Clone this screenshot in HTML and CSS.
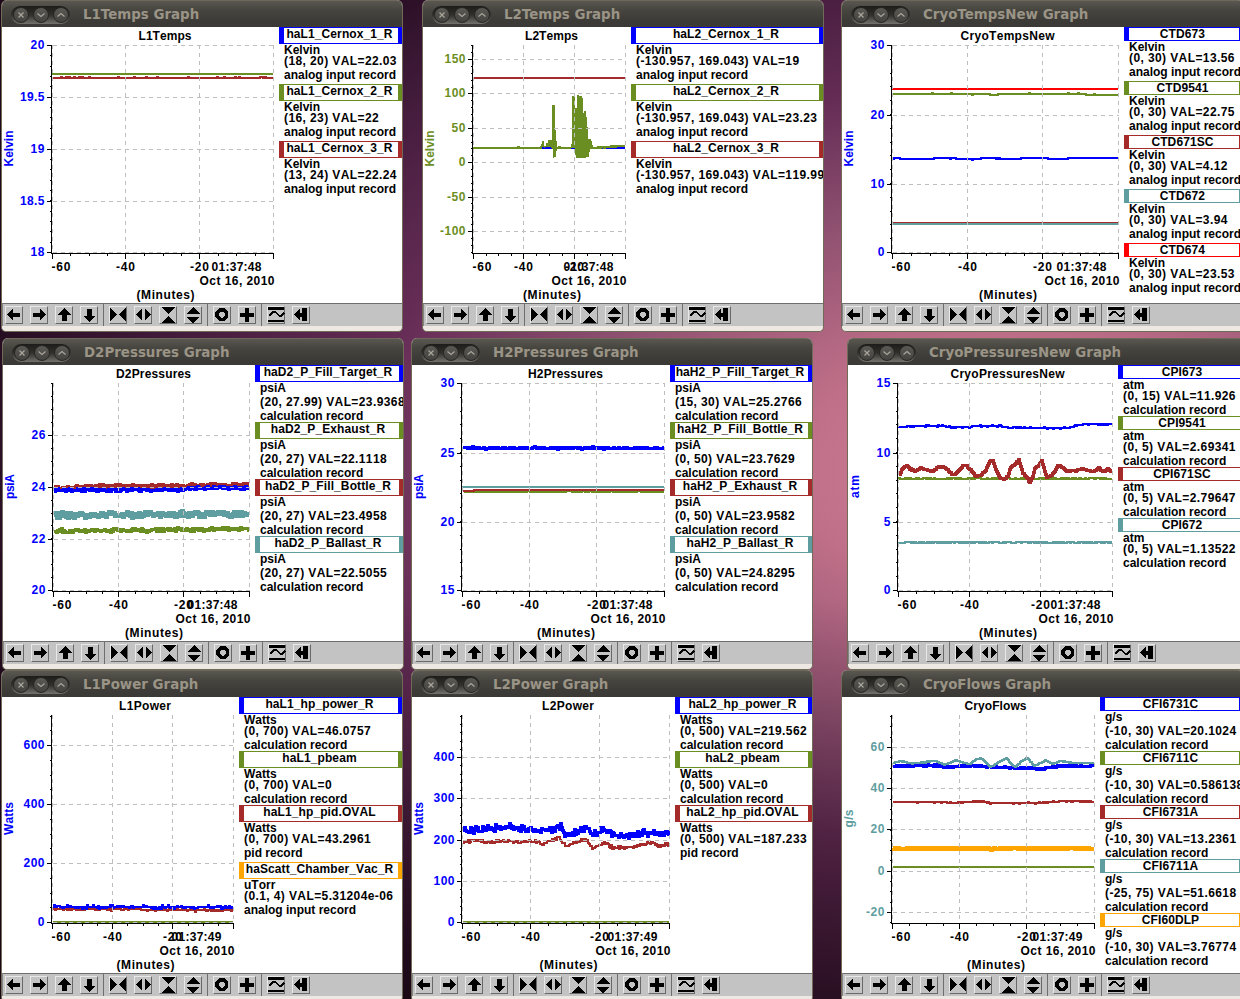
FILE: index.html
```
<!DOCTYPE html>
<html lang="en">
<head>
<meta charset="utf-8">
<title>StripTool Graphs</title>
<link rel="stylesheet" href="styles.css">
</head>
<body>
<svg class="defs" aria-hidden="true">
  <symbol id="i-left" viewBox="0 0 18 18"><path d="M2 8.5L8 2.500V6.5H15V11H8V15z"/></symbol>
  <symbol id="i-right" viewBox="0 0 18 18"><path d="M16 8.5L10 2.500V6.5H3V11H10V15z"/></symbol>
  <symbol id="i-up" viewBox="0 0 18 18"><path d="M9.5 2L16 9H12V15H7V9H3z"/></symbol>
  <symbol id="i-down" viewBox="0 0 18 18"><path d="M9.5 16L16 9.500H12V3H7V9.500H3z"/></symbol>
  <symbol id="i-hin" viewBox="0 0 18 18"><path d="M1 1.500L8 8.500L1 15.500zM17 1.500L10 8.500L17 15.500z"/></symbol>
  <symbol id="i-hout" viewBox="0 0 18 18"><path d="M8 2V15L1.500 8.500zM10.500 2V15L17 8.500z"/></symbol>
  <symbol id="i-vin" viewBox="0 0 18 18"><path d="M2 1H16L9 8zM2 17H16L9 10z"/></symbol>
  <symbol id="i-vout" viewBox="0 0 18 18"><path d="M2 8H16L9 1zM2 10.500H16L9 17z"/></symbol>
  <symbol id="i-ring" viewBox="0 0 18 18"><path fill-rule="evenodd" d="M6 2H11L15 6V11L11 15H6L2 11V6zM7.500 5.500L5.500 7.500V9.500L7.500 11.500H9.500L11.500 9.500V7.500L9.500 5.500z"/></symbol>
  <symbol id="i-plus" viewBox="0 0 18 18"><path d="M6.500 2H11V6.500H15.500V11H11V15.500H6.500V11H2V6.500H6.500z"/></symbol>
  <symbol id="i-wave" viewBox="0 0 18 18"><path d="M1 1H17V3.500H1zM1 13.500H17V16H1z"/><path d="M2 10L6 6H8L13 10H14L17 7" fill="none" stroke="#000" stroke-width="1.600"/></symbol>
  <symbol id="i-end" viewBox="0 0 18 18"><path d="M2 8.500L8 3V6.500H10V2H15V15H10V11H8V14.500z"/></symbol>
</svg>
<main class="desktop"></main>
<script src="app.js"></script>
</body>
</html>
```
FILE: styles.css
```
body {
  margin: 0;
  width: 1240px;
  height: 999px;
  overflow: hidden;
  font: bold 12px/12px "Liberation Sans", Arial, sans-serif;
  font-kerning: none;
  color: #000;
}

.defs { display: none; }

.desktop {
  position: relative;
  width: 1240px;
  height: 999px;
  overflow: hidden;
  background:
    linear-gradient(180deg, rgba(20, 5, 12, 0) 60%, rgba(20, 5, 12, .45) 100%),
    radial-gradient(ellipse 1090px 640px at 1010px 470px, #d58399 0, #bf6f88 20%, #8d4f6f 42%, #652c56 60%, #421b3b 80%, #1d0919 100%);
}

.window {
  position: absolute;
  display: flex;
  flex-direction: column;
  box-sizing: border-box;
  height: 332px;
  overflow: hidden;
  border: 1px solid #716a59;
  border-top: 0;
  border-radius: 6px 6px 5px 5px;
  background: #ede9e2;
}

.titlebar {
  display: flex;
  align-items: center;
  flex: 0 0 27px;
  box-sizing: border-box;
  padding: 1px 0 0 9px;
  border-top: 1px solid #6e675b;
  background: linear-gradient(#5a5751 0, #47453f 35%, #3d3b37 75%, #3a3935 100%);
  font: bold 13.4px/20px "DejaVu Sans", sans-serif;
  color: #9a9486;
}

.controls {
  display: flex;
  align-items: center;
  gap: 4px;
  box-sizing: border-box;
  width: 59px;
  height: 18px;
  margin-right: 13px;
  padding-left: 2px;
  border-radius: 9px;
  background: linear-gradient(#1d1c1a 0, #31302c 50%, #74726c 100%);
}

.controls svg {
  flex: none;
  box-sizing: border-box;
  width: 16px;
  height: 16px;
  fill: none;
  stroke: #aaa69c;
  stroke-width: 1.2;
  border: 1px solid #282724;
  border-radius: 50%;
  background: linear-gradient(#5b5954, #45433f);
}

.content {
  display: flex;
  flex: 0 0 276px;
  background: #fff;
}

.chart { flex: none; display: block; overflow: visible; }
.chart text { white-space: pre; }
.axis { stroke: #000; fill: none; shape-rendering: crispEdges; }
.grid { stroke: #bebebe; fill: none; stroke-dasharray: 4 4; shape-rendering: crispEdges; }
.trace { fill: none; stroke-width: 2; shape-rendering: crispEdges; }
.burst { stroke: none; shape-rendering: crispEdges; }

.legend { flex: 1; min-width: 0; overflow: hidden; }
.entry { padding-bottom: 1px; white-space: nowrap; }

.name {
  box-sizing: border-box;
  height: 17px;
  padding-right: 3px;
  border: solid;
  border-width: 1px 4px 1px 5px;
  text-align: center;
  letter-spacing: .1px;
}

.line { height: 11px; padding-left: 5px; }
.deep { height: 14px; }
.value { letter-spacing: .4px; }
.name.short { height: 14px; }

.toolbar {
  display: flex;
  align-items: center;
  flex: 0 0 23px;
  box-sizing: border-box;
  border-top: 1px solid #6e6e6e;
  border-left: 1px solid #858585;
  background: #c3c3c3;
}

.group {
  display: flex;
  align-items: center;
  gap: 7px;
  height: 22px;
  padding: 0 5px;
  border-right: 1px solid #6e6e6e;
}

.group:first-child { padding-left: 2px; }
.group:last-child { border-right: 0; }

.tool {
  display: block;
  width: 16px;
  height: 16px;
  border: 1px solid;
  border-color: #e8e8e8 #696969 #696969 #e8e8e8;
}

.tool svg { display: block; width: 18px; height: 18px; margin: -1px; shape-rendering: crispEdges; }
```
FILE: app.js
```
const BLUE = '#0000ff', OLIVE = '#6b8e23', BROWN = '#a52a2a', TEAL = '#5f9ea0', ORANGE = '#ffa500', RED = '#ff0000';
const AIR = 'analog input record', CALC = 'calculation record';

// y: [pixel, label] pairs; x: pixel columns of -60, -40, -20 and 0.
// Each trace is {c, p: [x, y, ...], n: noise amplitude, t: chance of a noise step}.
const graphs = [
  { left: 1, top: 0, name: 'L1Temps', unit: 'Kelvin', ulen: 36, color: BLUE, x: [52, 125, 199, 273], time: '01:37:48',
    y: [[45, '20'], [97, '19.5'], [149, '19'], [201, '18.5'], [252, '18']], div: 5,
    traces: [{ c: OLIVE, p: [52, 74, 272, 74] }, { c: BROWN, p: [53, 78, 272, 78], n: -1, t: .08 }],
    legend: [[BLUE, 'haL1_Cernox_1_R', 'Kelvin', '(18, 20) VAL=22.03', AIR], [OLIVE, 'haL1_Cernox_2_R', 'Kelvin', '(16, 23) VAL=22', AIR], [BROWN, 'haL1_Cernox_3_R', 'Kelvin', '(13, 24) VAL=22.24', AIR]] },
  { left: 422, top: 0, name: 'L2Temps', unit: 'Kelvin', ulen: 36, color: OLIVE, x: [473, 523, 574, 625], time: '01:37:48',
    y: [[59, '150'], [93, '100'], [128, '50'], [162, '0'], [197, '-50'], [231, '-100']], div: 5,
    traces: [{ c: BROWN, p: [474, 78, 624, 78] },
      { c: OLIVE, p: [473, 148, 624, 148], n: -1, t: .03 },
      { c: BLUE, p: [542, 148, 551, 148] }, { c: BLUE, p: [571, 148, 576, 148] }, { c: BLUE, p: [602, 148, 624, 148] },
      { c: OLIVE, fill: 'M541 147V144H542V141H544V146H546V143H548V140H552V105H555V130H556V141H557V151H556V157H554V158H553V148H551V147H545V148H544V147zM571 148V144H572V96H575V108H577V95H579V96H582V98H583V113H584V111H586V117H587V127H588V139H591V141H592V145H593V149H590V152H589V157H586V158H576V155H575V148z' },
      { c: OLIVE, p: [593, 148, 602, 147, 612, 147, 624, 145.500], n: .8, t: .5 }],
    legend: [[BLUE, 'haL2_Cernox_1_R', 'Kelvin', '(-130.957, 169.043) VAL=19', AIR], [OLIVE, 'haL2_Cernox_2_R', 'Kelvin', '(-130.957, 169.043) VAL=23.23', AIR], [BROWN, 'haL2_Cernox_3_R', 'Kelvin', '(-130.957, 169.043) VAL=119.99', AIR]] },
  { left: 841, top: 0, wide: 1, name: 'CryoTempsNew', unit: 'Kelvin', ulen: 36, color: BLUE, x: [892, 967, 1042, 1118], time: '01:37:48',
    y: [[45, '30'], [115, '20'], [184, '10'], [252, '0']], div: 5,
    traces: [{ c: RED, p: [892, 89, 1117, 89] }, { c: OLIVE, p: [893, 94, 985, 94, 995, 95, 1000, 94, 1082, 94, 1090, 95, 1117, 95], n: 1, t: .06 },
      { c: BLUE, p: [893, 158, 905, 159, 930, 159, 936, 158, 975, 159, 985, 158, 1010, 159, 1030, 158, 1065, 159, 1070, 158, 1117, 158], n: 1, t: .06 },
      { c: TEAL, p: [893, 224, 1117, 224] }, { c: BROWN, p: [893, 222.400, 1117, 222.400], w: 1 }],
    legend: [[BLUE, 'CTD673', 'Kelvin', '(0, 30) VAL=13.56', AIR], [OLIVE, 'CTD9541', 'Kelvin', '(0, 30) VAL=22.75', AIR], [BROWN, 'CTD671SC', 'Kelvin', '(0, 30) VAL=4.12', AIR], [TEAL, 'CTD672', 'Kelvin', '(0, 30) VAL=3.94', AIR], [RED, 'CTD674', 'Kelvin', '(0, 30) VAL=23.53', AIR]] },
  { left: 2, top: 338, name: 'D2Pressures', unit: 'psiA', ulen: 25, color: BLUE, x: [53, 118, 183, 249], time: '01:37:48',
    y: [[97, '26'], [149, '24'], [201, '22'], [252, '20']], div: 4,
    traces: [{ c: BROWN, p: [54, 150, 110, 148, 248, 147], n: 1.5, w: 3 }, { c: BLUE, p: [54, 152, 175, 152, 200, 150, 248, 150], n: 1.5, w: 3 },
      { c: TEAL, p: [54, 177, 248, 176], n: 2.8, w: 4 }, { c: OLIVE, p: [54, 193, 248, 191], n: 1.8, w: 3 }],
    legend: [[BLUE, 'haD2_P_Fill_Target_R', 'psiA', '(20, 27.99) VAL=23.9368', CALC], [OLIVE, 'haD2_P_Exhaust_R', 'psiA', '(20, 27) VAL=22.1118', CALC], [BROWN, 'haD2_P_Fill_Bottle_R', 'psiA', '(20, 27) VAL=23.4958', CALC], [TEAL, 'haD2_P_Ballast_R', 'psiA', '(20, 27) VAL=22.5055', CALC]] },
  { left: 411, top: 338, name: 'H2Pressures', unit: 'psiA', ulen: 25, color: BLUE, x: [462, 529, 596, 664], time: '01:37:48',
    y: [[45, '30'], [115, '25'], [184, '20'], [252, '15']], div: 5,
    traces: [{ c: BLUE, p: [463, 110, 663, 110], n: 1, t: .6, w: 3 }, { c: TEAL, p: [462, 149, 663, 149] },
      { c: OLIVE, p: [463, 153.600, 663, 153.600], n: .6 }, { c: BROWN, p: [463, 153, 485, 152, 663, 152], n: .5, t: .1 }],
    legend: [[BLUE, 'haH2_P_Fill_Target_R', 'psiA', '(15, 30) VAL=25.2766', CALC], [OLIVE, 'haH2_P_Fill_Bottle_R', 'psiA', '(0, 50) VAL=23.7629', CALC], [BROWN, 'haH2_P_Exhaust_R', 'psiA', '(0, 50) VAL=23.9582', CALC], [TEAL, 'haH2_P_Ballast_R', 'psiA', '(0, 50) VAL=24.8295', CALC]] },
  { left: 847, top: 338, name: 'CryoPressuresNew', unit: 'atm', ulen: 23, color: BLUE, x: [898, 969, 1040, 1112], time: '01:37:48',
    y: [[45, '15'], [115, '10'], [184, '5'], [252, '0']], div: 5,
    traces: [{ c: BLUE, p: [898, 89, 914, 88, 943, 88, 954, 89.500, 967, 89.500, 974, 88, 1000, 88, 1007, 89.500, 1040, 90, 1067, 90, 1077, 87, 1087, 86, 1111, 86.500], n: .6 },
      { c: OLIVE, p: [898, 140.600, 1111, 140.600], n: .7 },
      { c: BROWN, w: 3, n: .5, p: [899, 136, 902, 130, 906, 127, 909, 131, 914, 133, 920, 130, 927, 132, 932, 134, 937, 129, 942, 128, 947, 132, 952, 137, 957, 134, 962, 128, 965, 127, 970, 132, 975, 138, 980, 137, 985, 132, 989, 123, 992, 122, 995, 132, 1000, 141, 1004, 141, 1007, 138, 1010, 129, 1014, 127, 1018, 122, 1022, 135, 1027, 141, 1029, 145, 1032, 138, 1034, 130, 1038, 127, 1041, 123, 1044, 133, 1046, 139, 1050, 138, 1054, 133, 1057, 127, 1060, 128, 1065, 133, 1074, 133, 1080, 131, 1087, 132, 1092, 134, 1098, 130, 1102, 134, 1107, 131, 1111, 134] },
      { c: TEAL, p: [898, 204.500, 1111, 204.500], n: .5 }],
    legend: [[BLUE, 'CPI673', 'atm', '(0, 15) VAL=11.926', CALC], [OLIVE, 'CPI9541', 'atm', '(0, 5) VAL=2.69341', CALC], [BROWN, 'CPI671SC', 'atm', '(0, 5) VAL=2.79647', CALC], [TEAL, 'CPI672', 'atm', '(0, 5) VAL=1.13522', CALC]] },
  { left: 1, top: 670, name: 'L1Power', unit: 'Watts', ulen: 33, color: BLUE, x: [52, 112, 172, 233], time: '01:37:49',
    y: [[75, '600'], [134, '400'], [193, '200'], [252, '0']], div: 4,
    traces: [{ c: BROWN, p: [53, 239, 232, 240], n: 1.500, t: .6 }, { c: BLUE, p: [53, 237, 232, 237.500], n: 2, t: .6 }, { c: OLIVE, p: [53, 252, 232, 252] }],
    legend: [[BLUE, 'haL1_hp_power_R', 'Watts', '(0, 700) VAL=46.0757', CALC], [OLIVE, 'haL1_pbeam', 'Watts', '(0, 700) VAL=0', CALC], [BROWN, 'haL1_hp_pid.OVAL', 'Watts', '(0, 700) VAL=43.2961', 'pid record'], [ORANGE, 'haScatt_Chamber_Vac_R', 'uTorr', '(0.1, 4) VAL=5.31204e-06', AIR]] },
  { left: 411, top: 670, name: 'L2Power', unit: 'Watts', ulen: 33, color: BLUE, x: [462, 530, 599, 669], time: '01:37:49',
    y: [[87, '400'], [128, '300'], [170, '200'], [211, '100'], [252, '0']], div: 5,
    traces: [{ c: BLUE, w: 3, n: 3, p: [463, 161, 482, 159, 508, 157, 532, 160, 552, 160, 560, 157, 566, 166, 578, 161, 585, 157, 592, 165, 603, 159, 617, 167, 632, 165, 643, 163, 668, 164] },
      { c: BROWN, w: 2, n: 1.400, p: [463, 172, 477, 170, 485, 173, 505, 171, 518, 172, 535, 171, 542, 174, 558, 168, 566, 176, 585, 169, 592, 178, 605, 173, 613, 178, 632, 177, 651, 173, 658, 176, 668, 174] },
      { c: OLIVE, p: [463, 252, 668, 252] }],
    legend: [[BLUE, 'haL2_hp_power_R', 'Watts', '(0, 500) VAL=219.562', CALC], [OLIVE, 'haL2_pbeam', 'Watts', '(0, 500) VAL=0', CALC], [BROWN, 'haL2_hp_pid.OVAL', 'Watts', '(0, 500) VAL=187.233', 'pid record']] },
  { left: 841, top: 670, wide: 1, name: 'CryoFlows', unit: 'g/s', ulen: 18, color: TEAL, x: [892, 959, 1026, 1094], time: '01:37:49',
    y: [[77, '60'], [118, '40'], [159, '20'], [201, '0'], [242, '-20']], div: 4,
    traces: [{ c: BLUE, w: 3, n: .8, p: [893, 96, 934, 95.500, 944, 97.500, 967, 95.500, 994, 97, 1014, 98, 1040, 99, 1060, 96, 1093, 96] },
      { c: TEAL, n: .4, p: [893, 93, 900, 91, 909, 93.500, 920, 93, 934, 90.500, 944, 95, 955, 90, 969, 94.500, 975, 90, 980, 88, 983, 90, 990, 97, 997, 93, 1006, 88, 1010, 93, 1015, 97, 1022, 91, 1027, 88, 1034, 96, 1040, 93, 1045, 90, 1052, 94, 1060, 91, 1074, 93, 1093, 93] },
      { c: BROWN, p: [893, 132, 940, 132, 953, 133, 980, 131, 990, 133, 1040, 133, 1062, 131, 1093, 132], n: .5 },
      { c: ORANGE, w: 4, n: .8, p: [893, 178.500, 1093, 178.500] }, { c: OLIVE, p: [893, 197, 1093, 197] }],
    legend: [[BLUE, 'CFI6731C', 'g/s', '(-10, 30) VAL=20.1024', CALC], [OLIVE, 'CFI6711C', 'g/s', '(-10, 30) VAL=0.586138', CALC], [BROWN, 'CFI6731A', 'g/s', '(-10, 30) VAL=13.2361', CALC], [TEAL, 'CFI6711A', 'g/s', '(-25, 75) VAL=51.6618', CALC], [ORANGE, 'CFI60DLP', 'g/s', '(-10, 30) VAL=3.76774', CALC]] }
];

const titleWidths = { L1Temps: 53, L2Temps: 53, CryoTempsNew: 94, D2Pressures: 75, H2Pressures: 75, CryoPressuresNew: 114, L1Power: 52, L2Power: 52, CryoFlows: 62 };

let seed = 7;
function rnd() {
  seed = (seed * 1103515245 + 12345) % 2147483648;
  return seed / 2147483648;
}

function tracePath(t) {
  const p = t.p;
  let d = '', k = 0;
  for (let x = p[0]; x <= p[p.length - 2]; x++) {
    while (k < p.length - 4 && x > p[k + 2]) k += 2;
    let y = p[k + 1] + (p[k + 3] - p[k + 1]) * (x - p[k]) / (p[k + 2] - p[k]);
    if (t.n && rnd() < (t.t || 1)) y += t.n < 0 ? -1 : (rnd() + rnd() - 1) * t.n * 1.3;
    const half = (t.w || 2) % 2 ? .5 : 0;
    y = Math.round(y - half) + half;
    d += (d ? 'L' : 'M') + x + ' ' + y + 'H' + (x + 1);
  }
  return d;
}

function label(x, y, s, anchor, len, fill) {
  return `<text x="${x}" y="${y}" text-anchor="${anchor}" textLength="${len}" fill="${fill || '#000'}">${s}</text>`;
}

function chart(g) {
  const [l, a, b, r] = g.x.map(v => v + .5);
  const w = g.x[3] + 6 - g.left - 1;
  let grid = '', axis = `M${l - 1} 45V253.500M${l - 1} 253.500H${r + .5}`, text = '', data = '';
  for (const x of [l, a, b, r]) grid += `M${x} 45V253`;
  for (const [y] of g.y) { grid += `M${l} ${y + .5}H${r}`; axis += `M${l - 6} ${y + .5}H${l - 1}`; }
  const step = (g.y[g.y.length - 1][0] - g.y[0][0]) / (g.y.length - 1) / g.div;
  const y0 = g.y[0][0];
  for (let k = -12; k < 60; k++) {
    const y = Math.round(y0 + k * step);
    if (y >= 45 && y <= 252) axis += `M${l - 3} ${y + .5}H${l - 1}`;
  }
  for (let k = 0; k <= 12; k++) {
    const x = Math.floor(l + (r - l) * k / 12) + .5;
    if (k % 4) axis += `M${x} 253V256`;
  }
  for (const x of [l, a, b, r]) axis += `M${x} 253V259`;
  for (const [y, s] of g.y) {
    const n = s.replace(/[.-]/g, '').length * 7 + (s.includes('.') ? 3.500 : 0) + (s.includes('-') ? 4.500 : 0);
    text += label(l - 8, y + 4, s, 'end', n, g.color);
  }
  for (const t of g.traces) {
    data += t.fill ? `<path class="burst" fill="${t.c}" d="${t.fill}"/>`
      : `<path class="trace" stroke="${t.c}" style="stroke-width:${t.w || 2}" d="${tracePath(t)}"/>`;
  }
  const mid = (l + r) / 2 + 2;
  text += label(mid, 40, g.name, 'middle', titleWidths[g.name])
    + label(l - 1, 271, '-60', 'start', 19)
    + label(a, 271, '-40', 'middle', 19)
    + label(b, 271, '-20', 'middle', 19)
    + label(r - 12, 271, g.time, 'end', 50)
    + label(r + 1, 285, 'Oct 16, 2010', 'end', 75)
    + label(mid + .5, 299, '(Minutes)', 'middle', 58)
    + `<text transform="translate(${g.left + 12} 148.500) rotate(-90)" text-anchor="middle" textLength="${g.ulen}" fill="${g.color}">${g.unit}</text>`;
  return `<svg class="chart" width="${w}" height="276" viewBox="${g.left + 1} 27 ${w} 276">${data}<path class="grid" d="${grid}"/><path class="axis" d="${axis}"/>${text}</svg>`;
}

function lineClass(s) {
  return 'line' + (/[gjpqy(]/.test(s) ? ' deep' : '') + (s.startsWith('(') ? ' value' : '');
}

function legend(g) {
  return g.legend.map(([c, name, ...lines]) =>
    `<div class="entry"><div class="name${name.includes('_') ? '' : ' short'}" style="border-color:${c}">${name}</div>`
    + lines.map(s => `<div class="${lineClass(s)}">${s}</div>`).join('') + '</div>').join('');
}

const tool = id => `<span class="tool"><svg><use href="#i-${id}"/></svg></span>`;
const toolbar = [['left', 'right', 'up', 'down'], ['hin', 'hout', 'vin', 'vout'], ['ring', 'plus'], ['wave', 'end']]
  .map(g => `<div class="group">${g.map(tool).join('')}</div>`).join('');
const controls = ['M4.500 4.500L9.500 9.500M9.500 4.500L4.500 9.500', 'M3.500 5.500L7 8.500L10.500 5.500', 'M3.500 8.500L7 5.500L10.500 8.500']
  .map(d => `<svg viewBox="0 0 14 14"><path d="${d}"/></svg>`).join('');

document.querySelector('.desktop').innerHTML = graphs.map(g =>
  `<section class="window" style="left:${g.left}px;top:${g.top}px;width:${402 + (g.wide || 0)}px">
    <header class="titlebar"><span class="controls">${controls}</span>${g.name} Graph</header>
    <div class="content">${chart(g)}<div class="legend">${legend(g)}</div></div>
    <div class="toolbar">${toolbar}</div>
  </section>`).join('');
```
